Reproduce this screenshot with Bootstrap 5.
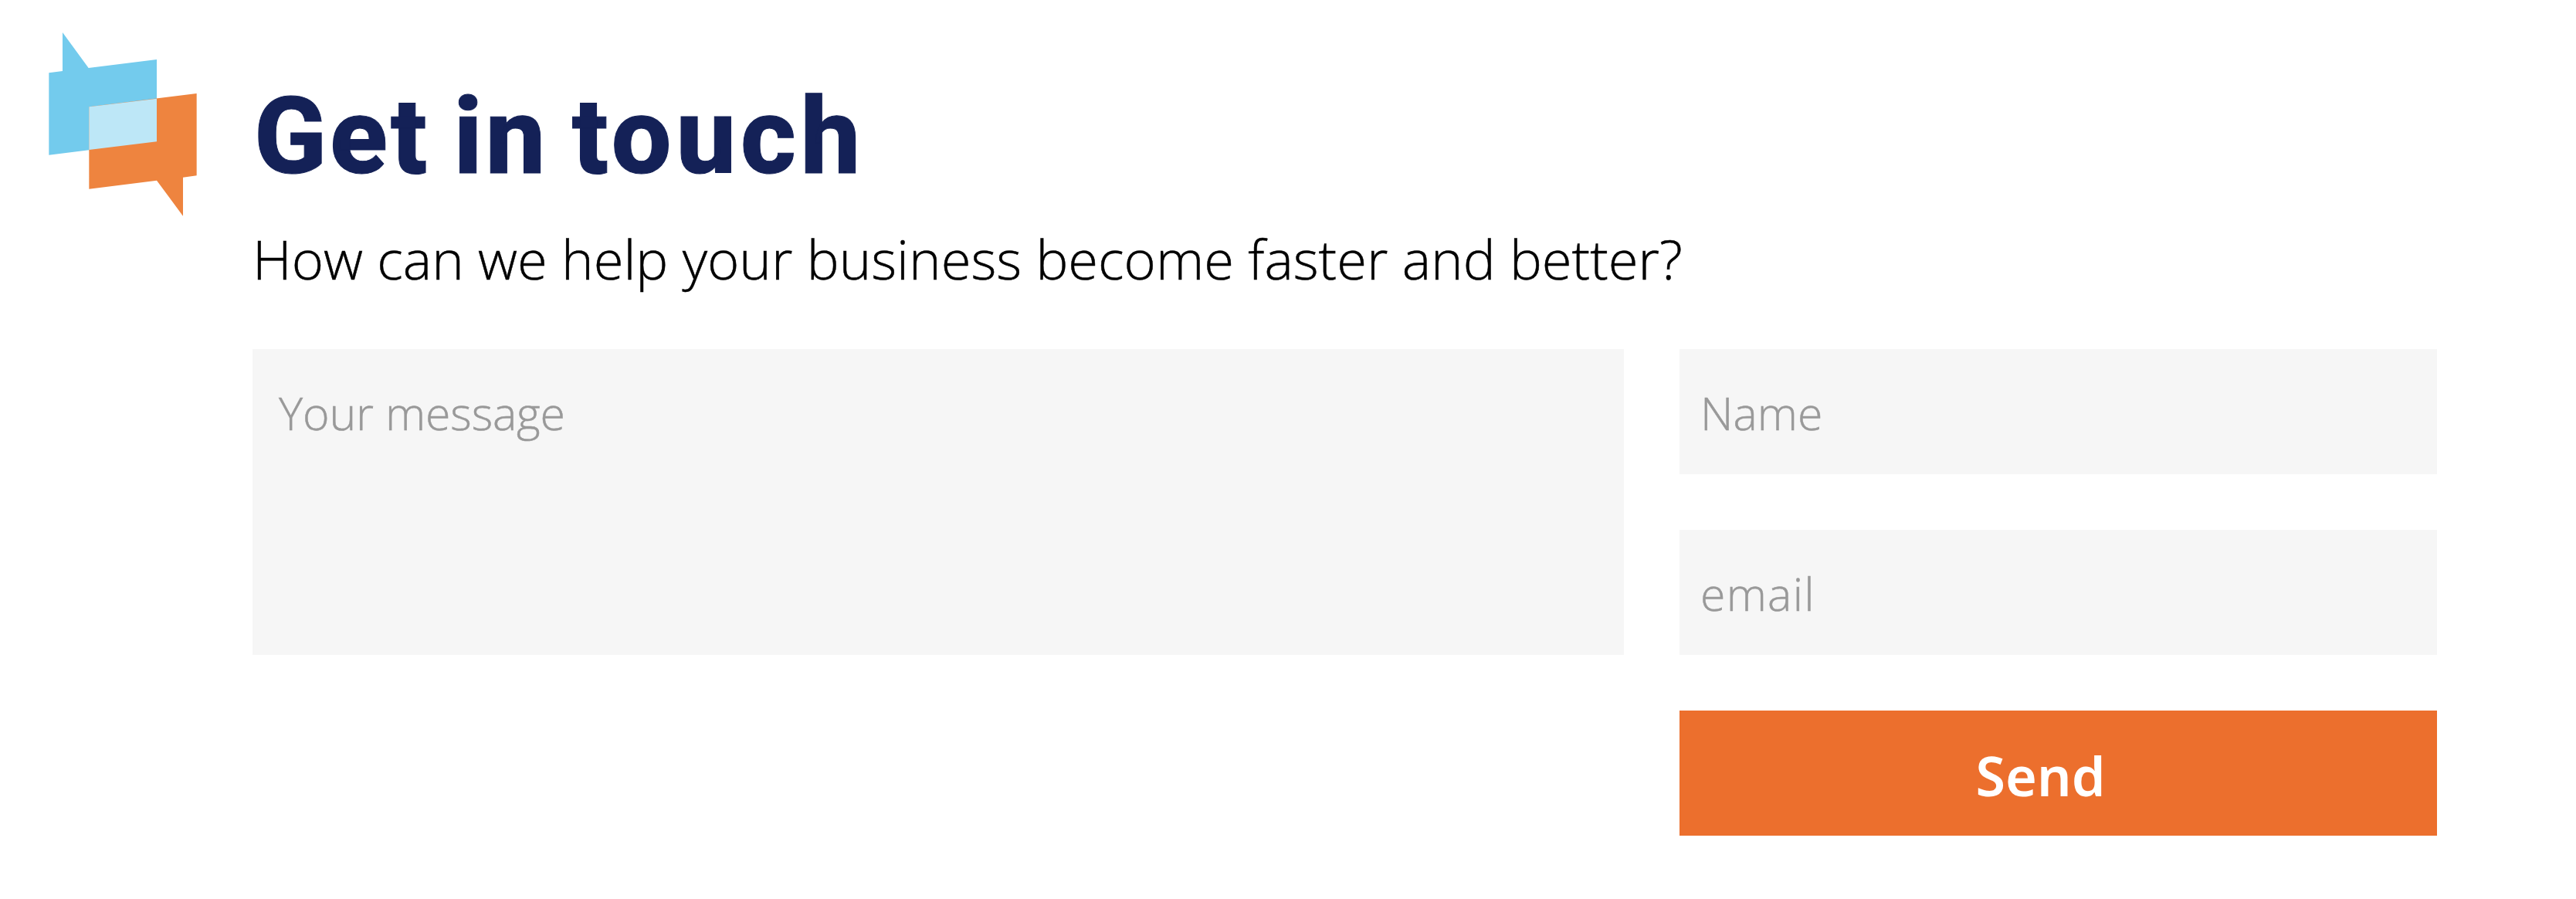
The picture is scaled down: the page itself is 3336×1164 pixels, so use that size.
<!DOCTYPE html>
<html lang="en">
<head>
<meta charset="utf-8">
<title>Get in touch</title>
<link rel="stylesheet" href="https://cdn.jsdelivr.net/npm/bootstrap@5.3.0/dist/css/bootstrap.min.css">
<style>
  body { background: #fff; color: #000; font-family: "Open Sans", sans-serif; overflow: hidden; }
  .contact { padding: 20px 180px 0 40px; }
  .logo { width: 240px; height: 280px; margin-right: 47px; }
  .contact-body { padding-top: 87px; }
  .title { font: 850 138px/140px Roboto, sans-serif; letter-spacing: 4px; word-spacing: -8px; color: #142157; margin: 0 0 40px; padding-left: 2px; -webkit-text-stroke: 1px #142157; }
  .title .wide { letter-spacing: 5.9px; }
  .subtitle { font-size: 70.5px; line-height: 96px; font-weight: 300; margin: 0 0 69px; -webkit-text-stroke: .5px #000; }
  .fields { gap: 72px; }
  .message-col { width: 1776px; }
  .form-control.field { border: 0; border-radius: 0; background: #f6f6f6; font-size: 59px; font-weight: 300; height: 162px; padding: 2px 27px 0; color: #000; }
  .form-control.message { height: 396px; line-height: 80px; padding: 42px 34px; letter-spacing: -.15px; resize: none; }
  .field[type="email"] { letter-spacing: 1.3px; }
  .form-control.field::placeholder { color: #999; opacity: 1; -webkit-text-stroke: .5px #999; }
  .btn.send { height: 162px; border: 0; border-radius: 0; background: #ec6f2d; color: #fff; font-family: "Noto Sans", sans-serif; font-size: 70px; font-weight: 570; line-height: 1; padding: 5px 46px 0 0; }
</style>
</head>
<body>
<main class="contact d-flex align-items-start">
  <svg class="logo flex-shrink-0" viewBox="0 0 720 840" aria-hidden="true">
    <path fill="#73cbed" d="M123 66 224 204 489 171V490L70 542V223L123 216Z"/>
    <path fill="#ee843f" d="M226 355 644 303V622L591 629V779L489 641 226 674Z"/>
    <path fill="#bde7f7" d="M226 355 489 323V490L226 522Z"/>
  </svg>
  <section class="contact-body flex-grow-1">
    <h1 class="title">Get in <span class="wide">touch</span></h1>
    <p class="subtitle">How can we help your business become faster and better?</p>
    <form class="fields d-flex">
      <div class="message-col flex-shrink-0">
        <textarea class="form-control field message" placeholder="Your message"></textarea>
      </div>
      <div class="fields d-flex flex-column flex-grow-1">
        <input type="text" class="form-control field" placeholder="Name">
        <input type="email" class="form-control field" placeholder="email">
        <button type="button" class="btn send w-100">Send</button>
      </div>
    </form>
  </section>
</main>
<script src="https://cdn.jsdelivr.net/npm/bootstrap@5.3.0/dist/js/bootstrap.bundle.min.js"></script>
</body>
</html>
